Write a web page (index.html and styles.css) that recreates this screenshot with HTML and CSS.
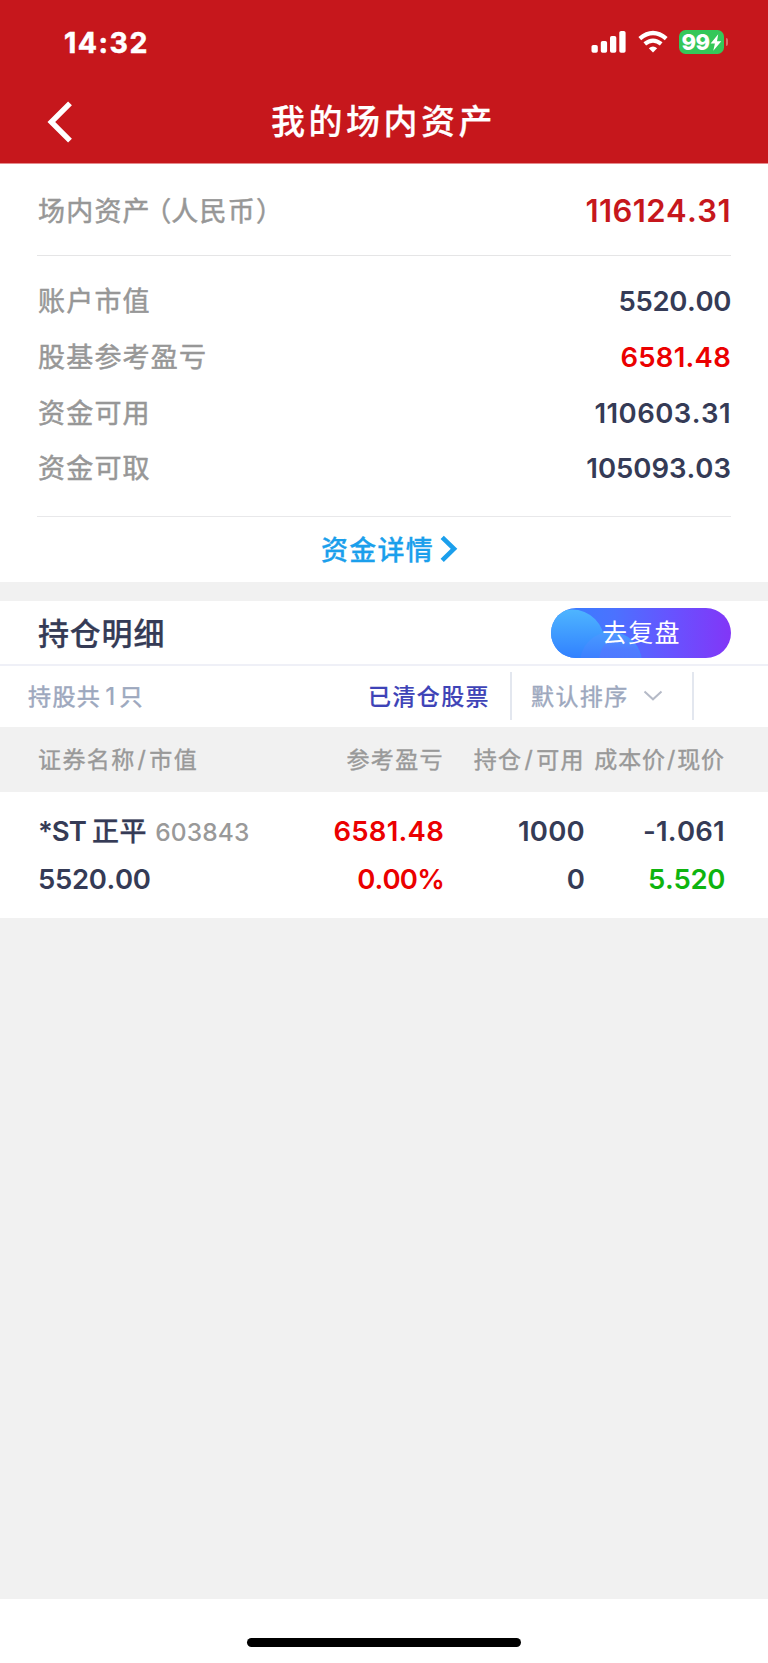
FILE: index.html
```html
<!DOCTYPE html>
<html lang="zh-CN">
<head>
<meta charset="utf-8">
<title>我的场内资产</title>
<link rel="stylesheet" href="styles.css">
</head>
<body>
<div class="screen">
  <header class="top">
    <div class="status">
      <span class="time">14:32</span>
      <svg class="signal" width="36" height="24" viewBox="0 0 36 24" fill="#fff"><rect x="0.5" y="15" width="6.3" height="7.8" rx="1.8"/><rect x="9.8" y="11" width="6.3" height="11.8" rx="1.8"/><rect x="19" y="6" width="6.3" height="16.8" rx="1.8"/><rect x="28.3" y="1" width="6.3" height="21.8" rx="1.8"/></svg>
      <svg class="wifi" width="30" height="24" viewBox="0 0 30 24"><path d="M1.8 8.6Q15-2.7 28.2 8.6" fill="none" stroke="#fff" stroke-width="4.3"/><path d="M6.8 13.9Q15 7.3 23.2 13.9" fill="none" stroke="#fff" stroke-width="4.2"/><path d="M10.8 18.2Q15 14.8 19.2 18.2L15 22.5Z" fill="#fff"/></svg>
      <div class="battery"><span>99</span><svg width="12" height="17" viewBox="0 0 12 17"><path d="M8.2.3.6 9.4h4.3L3.3 16.7 11.3 7.2H7z" fill="#fff"/></svg></div>
      <i class="nub"></i>
    </div>
    <div class="nav">
      <svg class="back" width="26" height="42" viewBox="0 0 26 42"><path d="M24 2.3 5.3 21 24 39.7" fill="none" stroke="#fff" stroke-width="5.4"/></svg>
      <h1>我的场内资产</h1>
    </div>
  </header>

  <section class="summary">
    <div class="total"><span class="label">场内资产<span class="paren open">（</span>人民币<span class="paren">）</span></span><b>116124.31</b></div>
    <div class="figures">
      <div class="line"><span class="label">账户市值</span><b class="snug">5520.00</b></div>
      <div class="line"><span class="label">股基参考盈亏</span><b class="red wide">6581.48</b></div>
      <div class="line"><span class="label">资金可用</span><b class="wider">110603.31</b></div>
      <div class="line"><span class="label">资金可取</span><b>105093.03</b></div>
    </div>
    <div class="more"><span>资金详情</span><svg width="18" height="28" viewBox="0 0 18 28"><path d="M2.2 2.3 14 13.8 2.2 25.4" fill="none" stroke="#1b9fec" stroke-width="4.6"/></svg></div>
  </section>

  <section class="holdings">
    <div class="heading">
      <h2>持仓明细</h2>
      <div class="review">
        <svg class="bubbles" width="180" height="51" viewBox="0 0 180 51"><defs><linearGradient id="a" x1="0" y1="0" x2="0" y2="1"><stop offset="0" stop-color="#4eb5ff"/><stop offset=".8" stop-color="#2f7dff"/></linearGradient><linearGradient id="c" x1="0" y1="0" x2="0" y2="1"><stop offset="0" stop-color="#4a9bff"/><stop offset=".5" stop-color="#3a7aff"/></linearGradient><linearGradient id="d" x1="0" y1="0" x2="0" y2="1"><stop offset="0" stop-color="#529aff" stop-opacity=".75"/><stop offset=".6" stop-color="#5577ff" stop-opacity=".7"/></linearGradient></defs><circle cx="21" cy="34" r="32.5" fill="url(#a)"/><circle cx="60" cy="55" r="31" fill="url(#c)"/><path d="M48 51C50 39 56 30 64 26C76 28 87 37 91 51Z" fill="url(#d)"/></svg>
        <span>去复盘</span>
      </div>
    </div>
    <div class="filters">
      <span class="count">持股共<i>1</i>只</span>
      <span class="cleared">已清仓股票</span>
      <div class="sort"><span>默认排序</span><svg width="20" height="12" viewBox="0 0 20 12"><path d="M1.5 1.5 10 9.3 18.5 1.5" fill="none" stroke="#b5bac7" stroke-width="2"/></svg></div>
    </div>
    <div class="grid thead"><span>证券名称<i>/</i>市值</span><span>参考盈亏</span><span>持仓<i>/</i>可用</span><span class="tight">成本价<i>/</i>现价</span></div>
    <div class="rows">
      <div class="grid"><span class="name">*ST<em>正平</em><small>603843</small></span><span class="red wide">6581.48</span><span class="wide">1000</span><span class="wide">-1.061</span></div>
      <div class="grid"><span class="snug">5520.00</span><span class="red percent">0.00%</span><span>0</span><span class="green snug">5.520</span></div>
    </div>
  </section>
  <div class="empty"></div>
  <footer class="bottom"><div class="home"></div></footer>
</div>
</body>
</html>
```
FILE: styles.css
```css
* { box-sizing: border-box; }
body { margin: 0; font-family: Inter, "Noto Sans CJK SC", sans-serif; font-kerning: none; color: #353b56; background: #f1f1f1; }
h1, h2 { margin: 0; font-weight: 500; -webkit-text-stroke: .25px currentColor; }
i, em { font-style: normal; }
svg { display: block; flex: none; }
.screen { width: 768px; height: 1663px; display: flex; flex-direction: column; overflow: hidden; }

.top { height: 164px; flex: none; background: #c6171c; color: #fff; border-bottom: 1px solid #e58b8d; }
.status { height: 82px; display: flex; align-items: center; padding: 2px 0 0 64px; }
.time { width: 527px; font-size: 28.5px; font-weight: 700; letter-spacing: 1.5px; -webkit-text-stroke: .5px #fff; }
.wifi { margin-left: 10.5px; }
.battery { margin-left: 11px; width: 45px; height: 24px; border-radius: 6.5px; background: #34c759; display: flex; align-items: center; padding-left: 3px; }
.battery span { width: 28px; font-size: 22px; font-weight: 800; letter-spacing: -.6px; line-height: 24px; }
.nub { width: 2px; height: 8px; margin-left: 2px; border-radius: 0 2px 2px 0; background: #dc686b; }
.nav { height: 81px; display: flex; align-items: center; padding: 0 0 1px 46px; }
.nav h1 { flex: 1; margin-left: 199px; font-size: 34px; letter-spacing: 3.5px; line-height: 50px; white-space: nowrap; }

.summary { height: 418px; flex: none; background: #fff; padding: 0 37px; }
.label { color: #979797; font-size: 27px; letter-spacing: 1.2px; -webkit-text-stroke: .5px #979797; padding-bottom: 2px; }
.total { height: 92px; display: flex; align-items: center; justify-content: space-between; border-bottom: 1px solid #e5e5e6; padding: 1px 0 0 1px; }
.total b { color: #c6171c; font-size: 31px; font-weight: 600; letter-spacing: .4px; }
.paren { display: inline-block; letter-spacing: 0; font-family: "Noto Sans CJK SC", sans-serif; font-kerning: auto; font-feature-settings: "halt"; }
.paren.open { margin-left: 7px; }
.figures { height: 261px; padding: 17px 0 0 1px; border-bottom: 1px solid #e8e8ea; }
.line { height: 55.7px; display: flex; align-items: center; justify-content: space-between; }
.line b { font-size: 27.5px; font-weight: 600; padding-top: 1px; }
.line .snug, .rows .snug { letter-spacing: -.35px; }
.line .wide, .rows .wide { letter-spacing: .25px; }
.line .wider { letter-spacing: .45px; }
.red, .line b.red { color: #eb0000; }
.green { color: #0fb40f; }
.more { height: 65px; display: flex; align-items: center; justify-content: center; gap: 6px; color: #1b9fec; font-size: 27px; font-weight: 500; letter-spacing: 1.2px; padding: 0 0 1px 11px; -webkit-text-stroke: .3px #1b9fec; }
.more span { padding-bottom: 1px; }

.holdings { margin-top: 19px; height: 317px; flex: none; background: #fff; }
.heading { height: 65px; display: flex; align-items: center; justify-content: space-between; padding: 0 37px 0 38px; border-bottom: 2px solid #eff0f7; }
.heading h2 { font-size: 31px; letter-spacing: .8px; padding-bottom: 2px; }
.review { position: relative; width: 180px; height: 50px; border-radius: 25px; overflow: hidden; background: linear-gradient(90deg, #3480ff, #4b72ff 35%, #6852ff 68%, #8236f7); color: #fff; }
.bubbles { position: absolute; left: 0; top: 0; }
.review span { position: relative; display: block; padding-left: 51px; font-size: 25px; letter-spacing: 1.2px; line-height: 50px; }
.filters { height: 61px; display: flex; align-items: center; font-size: 23px; letter-spacing: 1.4px; padding-bottom: 2px; }
.filters span { padding-bottom: 1px; }
.count { margin-left: 28px; width: 340px; color: #9da8be; -webkit-text-stroke: .5px #9da8be; }
.count i { margin: 0 3px 0 4px; font-weight: 500; font-size: 24px; -webkit-text-stroke: 0; }
.cleared { width: 142px; color: #3e43b7; font-weight: 500; -webkit-text-stroke: .15px #3e43b7; }
.sort { width: 184px; height: 48px; border-left: 2px solid #e3e7ef; border-right: 2px solid #e3e7ef; display: flex; align-items: center; padding-left: 19px; gap: 14px; color: #9da8be; -webkit-text-stroke: .4px #9da8be; }
.grid { display: grid; grid-template-columns: 258px 148px 141px 140px; padding-left: 38px; white-space: nowrap; align-items: center; text-align: right; }
.grid > :first-child { text-align: left; }
.thead { height: 65px; padding-bottom: 3px; background: #f1f1f1; color: #999; font-size: 23px; letter-spacing: 1.4px; -webkit-text-stroke: .4px #999; }
.thead i { margin: 0 2px; }
.thead .tight { letter-spacing: .9px; }
.thead .tight i { margin: 0 1px; }
.rows { height: 126px; padding-top: 15px; font-size: 27.5px; font-weight: 600; }
.rows .grid { height: 48px; }
.rows .name { letter-spacing: -1px; padding-bottom: 3px; }
.rows .percent { letter-spacing: -.8px; }
.rows em { font-size: 27px; font-weight: 500; margin-left: 6px; letter-spacing: .7px; -webkit-text-stroke: .25px currentColor; }
.rows small { margin-left: 8px; font-size: 24.5px; font-weight: 500; letter-spacing: .1px; color: #999; }

.empty { flex: 1; background: #f1f1f1; }
.bottom { height: 64px; flex: none; background: #fff; padding-top: 39px; }
.home { width: 274px; height: 9px; margin: 0 auto; border-radius: 5px; background: #000; }
```
